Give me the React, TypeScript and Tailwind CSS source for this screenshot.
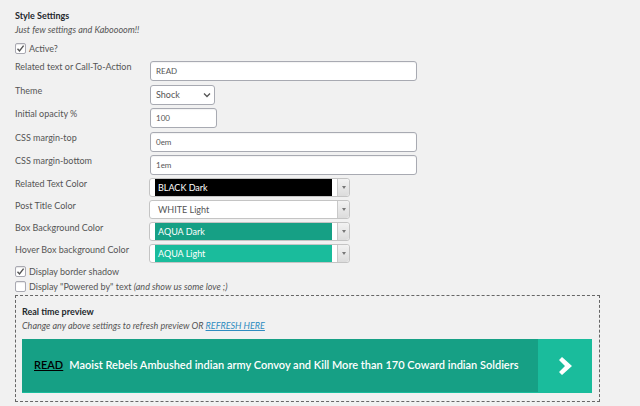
const font = "font-['Lato',sans-serif]";

function Check({ on, children }: { on?: boolean; children: React.ReactNode }) {
  return (
    <div className="flex items-center gap-[3px] h-[15px] text-[9px] text-[#555]">
      <span className="w-[11px] h-[11px] rounded-[2px] border border-[#a9a9b2] bg-white flex items-center justify-center shadow-[inset_0_1px_1px_rgba(0,0,0,0.1)]">
        {on && (
          <svg width="9" height="9" viewBox="0 0 9 9" fill="none">
            <path d="M1.5 4.8 3.5 7 7.6 1.6" stroke="#555" strokeWidth="1.4" />
          </svg>
        )}
      </span>
      <span>{children}</span>
    </div>
  );
}

function Row({ label, className, children }: { label: string; className: string; children: React.ReactNode }) {
  return (
    <div className={`flex ${className}`}>
      <div className="w-[135px] shrink-0 text-[9px] leading-[13px] text-[#555] -mt-[1px]">{label}</div>
      {children}
    </div>
  );
}

function TextField({ value, w }: { value: string; w: string }) {
  return (
    <div className={`${w} h-[20px] rounded-[3px] border border-[#a8aab2] bg-white pl-[5px] flex items-center text-[8px] text-[#555] shadow-[inset_0_1px_1px_rgba(0,0,0,0.05)]`}>
      {value}
    </div>
  );
}

function ColorSelect({ label, bg, text }: { label: string; bg: string; text: string }) {
  return (
    <div className="w-[201px] h-[19px] -ml-[1px] rounded-[3px] border border-[#c4c4c4] bg-white flex items-stretch">
      <div className="w-[5px]" />
      <div className={`w-[177px] ${bg} ${text} pl-[3px] flex items-center text-[9px]`}>{label}</div>
      <div className="w-[5px]" />
      <div className="flex-1 border-l border-[#c9c9c9] bg-gradient-to-b from-[#f2f2f2] to-[#dcdcdc] rounded-r-[3px] flex items-center justify-center">
        <span className="w-0 h-0 border-x-[2.5px] border-x-transparent border-t-[3px] border-t-[#777]" />
      </div>
    </div>
  );
}

export default function App() {
  return (
    <div className={`w-[640px] h-[406px] overflow-hidden bg-[#f1f1f1] pl-[15px] pt-[9px] ${font}`}>
      <h2 className="text-[9px] leading-[13px] font-bold text-[#23282d]">Style Settings</h2>
      <p className="text-[9px] leading-[13px] italic text-[#555] mt-[1px]">Just few settings and Kaboooom!!</p>
      <div className="mt-[5px]">
        <Check on>Active?</Check>
      </div>
      <Row label="Related text or Call-To-Action" className="mt-[5px]">
        <TextField value="READ" w="w-[267px]" />
      </Row>
      <Row label="Theme" className="mt-[4px]">
        <div className="w-[65px] h-[20px] rounded-[3px] border border-[#a8aab2] bg-white pl-[5px] pr-[3px] flex items-center justify-between text-[9px] text-[#555]">
          Shock
          <svg width="8" height="6" viewBox="0 0 8 6" fill="none">
            <path d="M1 1.5 4 4.5 7 1.5" stroke="#555" strokeWidth="1.3" />
          </svg>
        </div>
      </Row>
      <Row label="Initial opacity %" className="mt-[3px]">
        <TextField value="100" w="w-[67px]" />
      </Row>
      <Row label="CSS margin-top" className="mt-[4px]">
        <TextField value="0em" w="w-[267px]" />
      </Row>
      <Row label="CSS margin-bottom" className="mt-[3px]">
        <TextField value="1em" w="w-[267px]" />
      </Row>
      <Row label="Related Text Color" className="mt-[3px]">
        <ColorSelect label="BLACK Dark" bg="bg-black" text="text-white" />
      </Row>
      <Row label="Post Title Color" className="mt-[3px]">
        <ColorSelect label="WHITE Light" bg="bg-white" text="text-[#555]" />
      </Row>
      <Row label="Box Background Color" className="mt-[3px]">
        <ColorSelect label="AQUA Dark" bg="bg-[#16a085]" text="text-white" />
      </Row>
      <Row label="Hover Box background Color" className="mt-[3px]">
        <ColorSelect label="AQUA Light" bg="bg-[#1abc9c]" text="text-white" />
      </Row>
      <div className="mt-[1px]">
        <Check on>Display border shadow</Check>
      </div>
      <Check>
        Display "Powered by" text <em>(and show us some love ;)</em>
      </Check>
      <div className="w-[585px] h-[107px] mt-[1px] border border-dashed border-[#666] pl-[6px] pt-[9px]">
        <h3 className="text-[9px] leading-[13px] font-bold text-[#23282d]">Real time preview</h3>
        <p className="text-[9px] leading-[13px] italic text-[#555] mt-[1px]">
          Change any above settings to refresh preview OR{" "}
          <a className="text-[#2e8bc0] underline">REFRESH HERE</a>
        </p>
        <div className="w-[570px] h-[54px] mt-[7px] flex bg-[#16a085] border-b border-[#1abc9c]">
          <div className="flex-1 flex items-center pl-[12px] text-[11px] font-semibold text-white whitespace-nowrap">
            <span className="text-black underline mr-[6px]">READ</span>
            Maoist Rebels Ambushed indian army Convoy and Kill More than 170 Coward indian Soldiers
          </div>
          <div className="w-[54px] bg-[#1abc9c] flex items-center justify-center">
            <svg width="13" height="18" viewBox="0 0 13 18">
              <path d="M0 3 3 0 13 9 3 18 0 15 6 9Z" fill="#fff" />
            </svg>
          </div>
        </div>
      </div>
    </div>
  );
}
